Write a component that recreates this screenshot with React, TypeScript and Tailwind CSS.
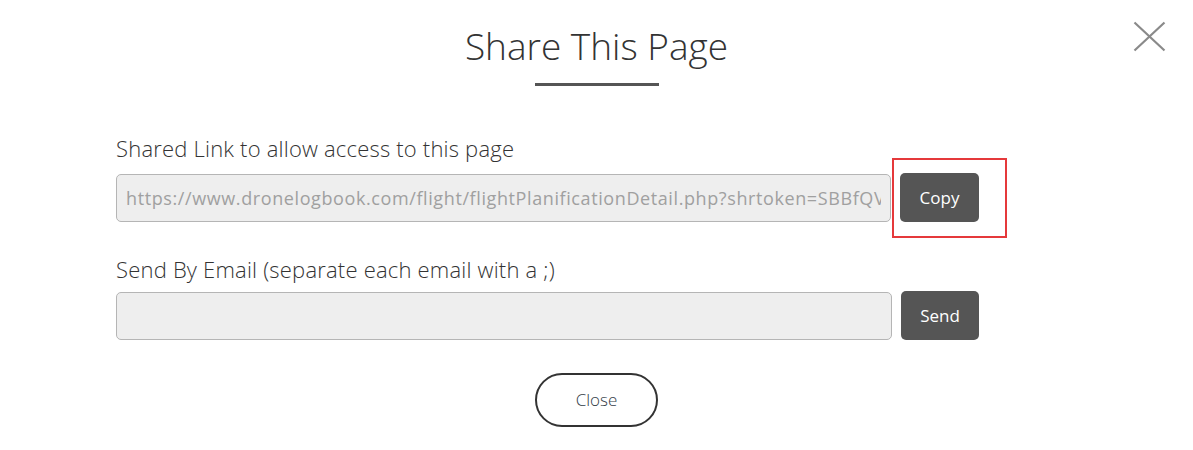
import React from "react";

export default function App() {
  const font = { fontFamily: "'Open Sans', 'Noto Sans', sans-serif" };
  return (
    <div className="relative w-[1193px] h-[450px] bg-white text-[#333]" style={font}>
      <button className="absolute left-[1133px] top-[21px] w-[33px] h-[31px]" aria-label="close">
        <svg width="33" height="31" viewBox="0 0 33 31">
          <path d="M1.5 1.5 L31.5 29.5 M31.5 1.5 L1.5 29.5" stroke="#8a8a8a" strokeWidth="2.2" fill="none" />
        </svg>
      </button>
      <div className="flex flex-col items-center pt-[23px]">
        <h1 className="text-[37px] leading-[46px] font-light text-[#333]">Share This Page</h1>
        <div className="mt-[14px] w-[124px] h-[3px] bg-[#555]" />
      </div>
      <div className="ml-[116px] w-[863px] mt-[47px]">
        <div className="text-[22px] leading-[30px] font-light tracking-[0.2px]">Shared Link to allow access to this page</div>
        <div className="relative flex items-center gap-[9px] mt-[10px]">
          <input
            readOnly
            placeholder="https://www.dronelogbook.com/flight/flightPlanificationDetail.php?shrtoken=SBBfQVJgk2Lx"
            className="flex-1 min-w-0 h-[48px] bg-[#eeeeee] border border-[#b5b5b5] rounded-[5px] px-[9px] text-[18px] tracking-[0.6px] placeholder-[#a0a0a0] text-[#a0a0a0] outline-none"
            style={font}
          />
          <button className="w-[79px] h-[49px] bg-[#555] rounded-[5px] text-white text-[17px]">Copy</button>
          <div className="absolute left-[776px] top-[-15px] w-[115px] h-[80px] border-2 border-[#e5393b]" />
        </div>
        <div className="text-[22px] leading-[30px] font-light tracking-[0.2px] mt-[32px]">Send By Email (separate each email with a ;)</div>
        <div className="flex items-center gap-[9px] mt-[7px]">
          <input
            className="flex-1 min-w-0 h-[48px] bg-[#eeeeee] border border-[#b5b5b5] rounded-[5px] px-[9px] text-[17px] outline-none"
            style={font}
          />
          <button className="w-[78px] h-[49px] bg-[#555] rounded-[5px] text-white text-[17px]">Send</button>
        </div>
      </div>
      <div className="flex justify-center mt-[33px]">
        <button className="w-[123px] h-[54px] rounded-full border-2 border-[#333] text-[17px] text-[#333d47] font-light">Close</button>
      </div>
    </div>
  );
}
